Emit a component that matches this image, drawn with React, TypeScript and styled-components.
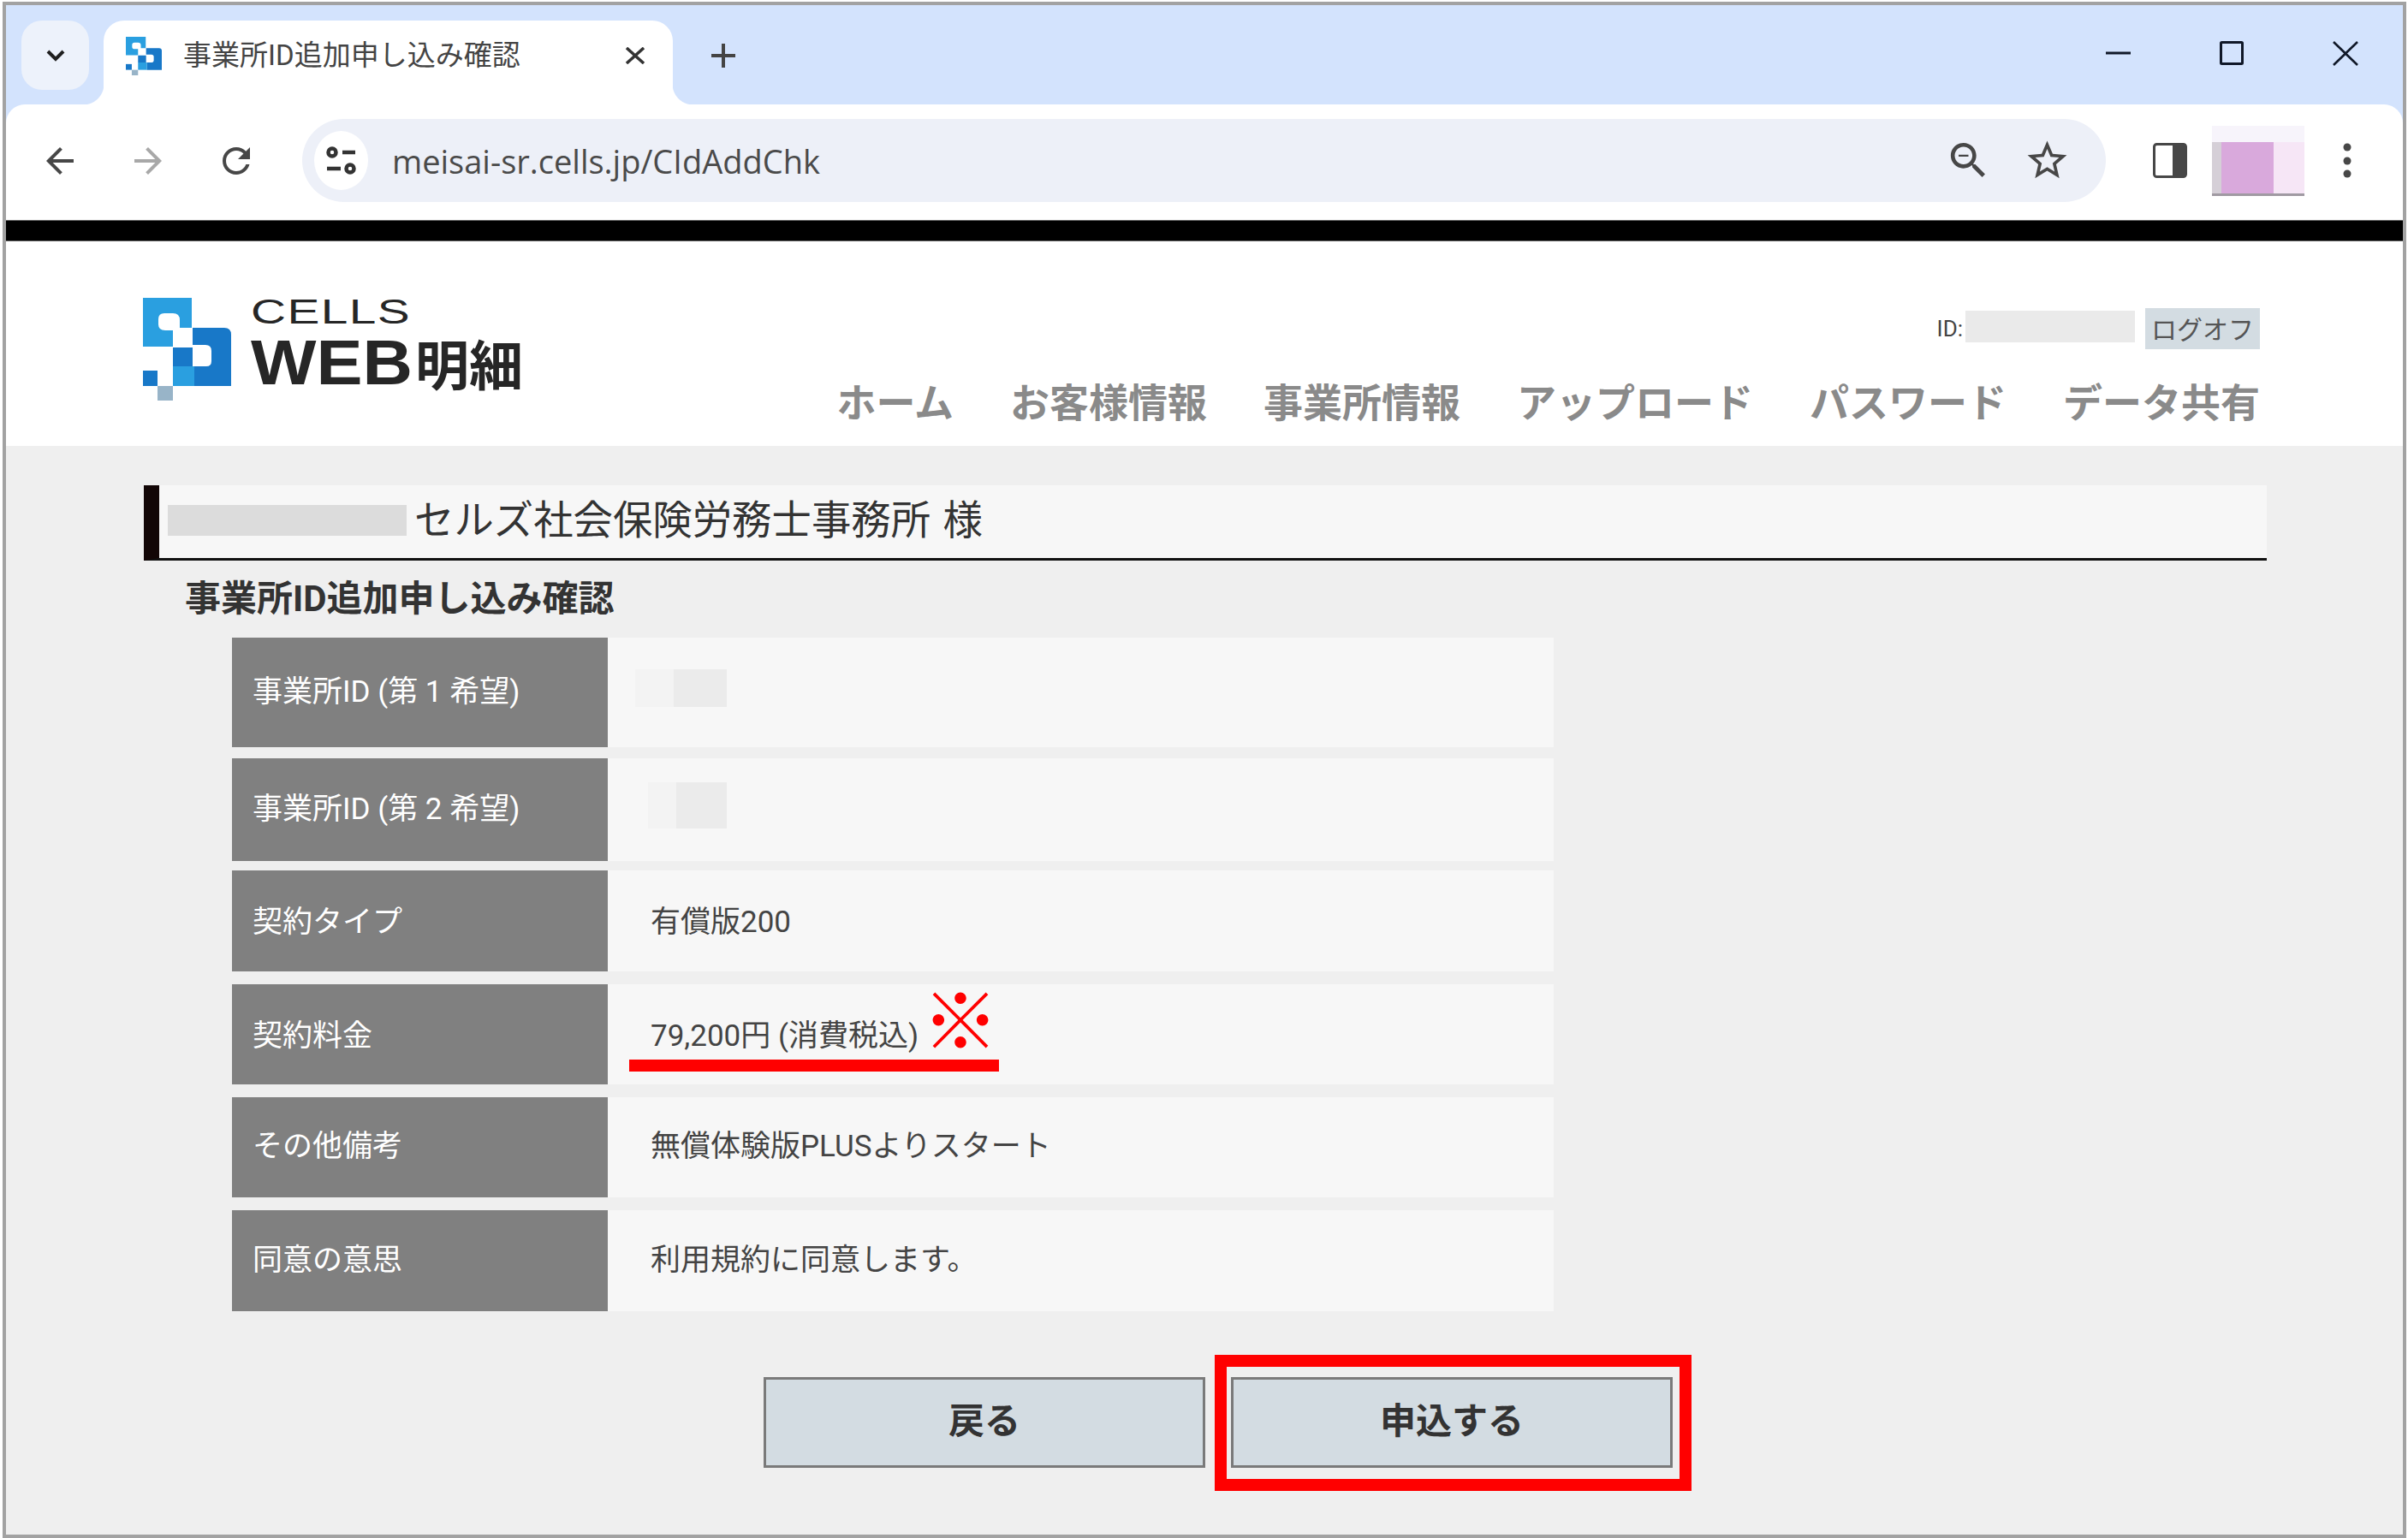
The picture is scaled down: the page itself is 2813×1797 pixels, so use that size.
import React from 'react'
import styled, { createGlobalStyle } from 'styled-components'

const GlobalStyle = createGlobalStyle`
  html, body {
    margin: 0;
    padding: 0;
    background: #fff;
  }
  body {
    font-family: Roboto, "Noto Sans CJK JP", sans-serif;
  }
`

const rows = [
  { label: '事業所ID (第 1 希望)', height: 128, gap: 13, lift: 10, blur: { left: -18, width: 107, height: 44, light: 45 } },
  { label: '事業所ID (第 2 希望)', height: 120, gap: 11, lift: 10, blur: { left: -3, width: 92, height: 54, light: 33 } },
  { label: '契約タイプ', value: '有償版200', height: 118, gap: 15, lift: 5 },
  { label: '契約料金', value: '79,200円 (消費税込)', height: 117, gap: 15, lift: 4, note: true },
  { label: 'その他備考', value: '無償体験版PLUSよりスタート', height: 117, gap: 15, lift: 11 },
  { label: '同意の意思', value: '利用規約に同意します。', height: 118, gap: 0, lift: 10 },
]

const menu = ['ホーム', 'お客様情報', '事業所情報', 'アップロード', 'パスワード', 'データ共有']

function LogoMark({ width, height }: { width: number; height: number }) {
  return (
    <svg width={width} height={height} viewBox="0 0 103 120" preserveAspectRatio="none">
      <path fill="#2a9fe0" d="M0 0H57V35H43V26Q43 18 35 18H25Q18 18 18 25V31Q18 38 26 38H35V57H0Z" />
      <path fill="#1878c8" d="M58 35H95Q103 35 103 43V103H60V80H74Q80 80 80 74V62Q80 55 73 55H58Z" />
      <rect fill="#1878c8" x="35" y="58" width="23" height="22" />
      <rect fill="#2a9fe0" x="35" y="80" width="25" height="23" />
      <rect fill="#1878c8" x="0" y="85" width="17" height="18" />
      <rect fill="#98b4c8" x="17" y="103" width="18" height="17" />
    </svg>
  )
}

function Material({ size, path, color }: { size: number; path: string; color: string }) {
  return (
    <svg width={size} height={size} viewBox="0 0 24 24" fill={color}>
      <path d={path} />
    </svg>
  )
}

const arrowBack = 'M20 11H7.83l5.59-5.59L12 4l-8 8 8 8 1.41-1.41L7.83 13H20z'
const arrowForward = 'M4 11h12.17l-5.59-5.59L12 4l8 8-8 8-1.41-1.41L16.17 13H4z'
const reload = 'M17.65 6.35C16.2 4.9 14.21 4 12 4c-4.42 0-7.99 3.58-7.99 8s3.57 8 7.99 8c3.73 0 6.84-2.55 7.73-6h-2.08c-.82 2.33-3.04 4-5.65 4-3.31 0-6-2.69-6-6s2.69-6 6-6c1.66 0 3.14.69 4.22 1.78L13 11h7V4l-2.35 2.35z'
const zoomOut = 'M15.5 14h-.79l-.28-.27C15.41 12.59 16 11.11 16 9.5 16 5.91 13.09 3 9.5 3S3 5.91 3 9.5 5.91 16 9.5 16c1.61 0 3.09-.59 4.23-1.57l.27.28v.79l5 4.99L20.49 19l-4.99-5zm-6 0C7.01 14 5 11.99 5 9.5S7.01 5 9.5 5 14 7.01 14 9.5 11.99 14 9.5 14zM7 9h5v1H7z'
const star = 'M22 9.24l-7.19-.62L12 2 9.19 8.63 2 9.24l5.46 4.73L5.82 21 12 17.27 18.18 21l-1.63-7.03L22 9.24zM12 15.4l-3.76 2.27 1-4.28-3.32-2.88 4.38-.38L12 6.1l1.71 4.04 4.38.38-3.32 2.88 1 4.28L12 15.4z'

export default function App() {
  return (
    <>
      <GlobalStyle />
      <Frame>
        <TabBar>
          <TabList>
            <svg width="24" height="16" viewBox="0 0 24 16" fill="none" stroke="#1f1f1f" strokeWidth="4">
              <path d="M3 3l9 9 9-9" />
            </svg>
          </TabList>
          <Tab>
            <LogoMark width={42} height={45} />
            <TabTitle>事業所ID追加申し込み確認</TabTitle>
            <TabClose>
              <svg width="24" height="20" viewBox="0 0 24 20" stroke="#333" strokeWidth="3.5">
                <path d="M2 1l20 18M22 1L2 19" />
              </svg>
            </TabClose>
          </Tab>
          <NewTab>
            <svg width="28" height="28" viewBox="0 0 28 28" stroke="#444" strokeWidth="4">
              <path d="M14 0v28M0 14h28" />
            </svg>
          </NewTab>
          <WindowButtons>
            <svg width="29" height="28" viewBox="0 0 29 28" stroke="#101828" strokeWidth="3">
              <path d="M0 14h29" />
            </svg>
            <svg width="28" height="28" viewBox="0 0 28 28" fill="none" stroke="#101828" strokeWidth="3">
              <rect x="1.5" y="1.5" width="25" height="25" rx="1" />
            </svg>
            <svg width="30" height="29" viewBox="0 0 30 29" stroke="#101828" strokeWidth="2.6">
              <path d="M1 1l28 27M29 1L1 28" />
            </svg>
          </WindowButtons>
        </TabBar>

        <Toolbar>
          <NavButtons>
            <Material size={48} path={arrowBack} color="#474747" />
            <Material size={48} path={arrowForward} color="#a8a8a8" />
            <Material size={48} path={reload} color="#474747" />
          </NavButtons>
          <Omnibox>
            <SiteButton>
              <svg width="36" height="36" viewBox="0 0 36 36" fill="none" stroke="#333" strokeWidth="4.5">
                <circle cx="7" cy="8" r="4.5" />
                <path d="M19 8h15M1 27h16" />
                <circle cx="28" cy="27" r="4.5" />
              </svg>
            </SiteButton>
            <Url>meisai-sr.cells.jp/CIdAddChk</Url>
            <OmniboxIcons>
              <Material size={55} path={zoomOut} color="#474747" />
              <Material size={55} path={star} color="#474747" />
            </OmniboxIcons>
          </Omnibox>
          <SidePanelIcon>
            <svg width="40" height="41" viewBox="0 0 40 41">
              <rect x="1.5" y="1.5" width="37" height="38" rx="3" fill="#fff" stroke="#474747" strokeWidth="3" />
              <rect x="23" y="1.5" width="15.5" height="38" fill="#474747" />
            </svg>
          </SidePanelIcon>
          <ProfileBlock />
          <MoreIcon>
            <svg width="12" height="44" viewBox="0 0 12 44" fill="#474747">
              <circle cx="6" cy="6" r="4.5" />
              <circle cx="6" cy="22" r="4.5" />
              <circle cx="6" cy="37" r="4.5" />
            </svg>
          </MoreIcon>
        </Toolbar>

        <BlackBar />

        <Header>
          <Logo>
            <LogoMark width={103} height={120} />
            <LogoText>
              <LogoCells>CELLS</LogoCells>
              <LogoName>
                <LogoWeb>WEB</LogoWeb>
                <LogoKanji>明細</LogoKanji>
              </LogoName>
            </LogoText>
          </Logo>
          <HeaderRight>
            <UserRow>
              <UserId>ID:</UserId>
              <UserBlur />
              <LogoffButton>ログオフ</LogoffButton>
            </UserRow>
            <Menu>
              {menu.map(item => (
                <MenuItem key={item}>{item}</MenuItem>
              ))}
            </Menu>
          </HeaderRight>
        </Header>

        <Content>
          <TitleBar>
            <TitleBlur />
            <TitleText>セルズ社会保険労務士事務所 様</TitleText>
          </TitleBar>
          <Heading>事業所ID追加申し込み確認</Heading>
          <Table>
            {rows.map(row => (
              <Row key={row.label} $height={row.height} $gap={row.gap}>
                <LabelCell $lift={row.lift}>{row.label}</LabelCell>
                <ValueCell $lift={row.lift}>
                  {row.blur ? (
                    <ValueBlur
                      $left={row.blur.left}
                      $width={row.blur.width}
                      $height={row.blur.height}
                      $light={row.blur.light}
                    />
                  ) : (
                    row.value
                  )}
                  {row.note && (
                    <>
                      <NoteMark>※</NoteMark>
                      <NoteLine />
                    </>
                  )}
                </ValueCell>
              </Row>
            ))}
          </Table>
          <Buttons>
            <ActionButton>戻る</ActionButton>
            <Submit>
              <ActionButton>申込する</ActionButton>
              <Highlight />
            </Submit>
          </Buttons>
        </Content>
      </Frame>
    </>
  )
}

const Frame = styled.div`
  box-sizing: border-box;
  width: 2808px;
  height: 1795px;
  margin: 2px 0 0 3px;
  border: 4px solid #a2a2a2;
  display: flex;
  flex-direction: column;
  background: #d3e3fd;
  overflow: hidden;
`

const TabBar = styled.div`
  height: 116px;
  flex-shrink: 0;
  display: flex;
  align-items: flex-start;
  box-sizing: border-box;
  padding: 18px 52px 0 18px;
`

const TabList = styled.div`
  width: 79px;
  height: 81px;
  border-radius: 24px;
  background: #edf2fb;
  display: flex;
  align-items: center;
  justify-content: center;
  flex-shrink: 0;
`

const Tab = styled.div`
  position: relative;
  width: 665px;
  height: 98px;
  margin-left: 17px;
  box-sizing: border-box;
  padding: 0 32px 16px 26px;
  display: flex;
  align-items: center;
  background: #fff;
  border-radius: 24px 24px 0 0;
  flex-shrink: 0;

  &::before,
  &::after {
    content: '';
    position: absolute;
    bottom: 0;
    width: 24px;
    height: 24px;
  }
  &::before {
    left: -24px;
    background: radial-gradient(circle at 0 0, transparent 24px, #fff 25px);
  }
  &::after {
    right: -24px;
    background: radial-gradient(circle at 100% 0, transparent 24px, #fff 25px);
  }
`

const TabTitle = styled.div`
  margin-left: 25px;
  font-size: 33px;
  line-height: 40px;
  color: #444;
  white-space: nowrap;
`

const TabClose = styled.div`
  margin-left: auto;
  display: flex;
`

const NewTab = styled.div`
  height: 81px;
  margin-left: 45px;
  display: flex;
  align-items: center;
`

const WindowButtons = styled.div`
  margin-left: auto;
  height: 76px;
  display: flex;
  align-items: center;
  gap: 104px;
`

const Toolbar = styled.div`
  height: 135px;
  flex-shrink: 0;
  box-sizing: border-box;
  padding: 0 0 4px 39px;
  display: flex;
  align-items: center;
  background: #fff;
  border-radius: 22px 22px 0 0;
`

const NavButtons = styled.div`
  display: flex;
  align-items: center;
  gap: 55px;
`

const Omnibox = styled.div`
  width: 2107px;
  height: 97px;
  margin-left: 53px;
  box-sizing: border-box;
  padding: 0 41px 0 14px;
  display: flex;
  align-items: center;
  background: #edf0f8;
  border-radius: 49px;
`

const SiteButton = styled.div`
  width: 63px;
  height: 69px;
  border-radius: 50%;
  background: #fff;
  display: flex;
  align-items: center;
  justify-content: center;
`

const Url = styled.div`
  margin-left: 28px;
  font-family: "Open Sans", "Noto Sans", sans-serif;
  font-size: 38px;
  color: #4a4a4a;
  white-space: nowrap;
`

const OmniboxIcons = styled.div`
  margin-left: auto;
  display: flex;
  align-items: center;
  gap: 37px;
`

const SidePanelIcon = styled.div`
  margin-left: 55px;
  display: flex;
`

const ProfileBlock = styled.div`
  width: 108px;
  height: 82px;
  margin-left: 29px;
  border-bottom: 3px solid #a09aa2;
  box-sizing: border-box;
  background:
    linear-gradient(#f7f4fb, #f7f4fb) 0 0 / 100% 19px no-repeat,
    linear-gradient(#d9a9dc, #d9a9dc) 11px 0 / 61px 100% no-repeat,
    linear-gradient(#d5cfd7, #d5cfd7) 0 0 / 11px 100% no-repeat,
    #f6e6f6;
`

const MoreIcon = styled.div`
  margin-left: 44px;
  display: flex;
`

const BlackBar = styled.div`
  height: 25px;
  flex-shrink: 0;
  box-sizing: border-box;
  background: #000;
  border-top: 1px solid #666;
  border-bottom: 1px solid #666;
`

const Header = styled.header`
  height: 239px;
  flex-shrink: 0;
  box-sizing: border-box;
  padding: 0 167px 0 160px;
  display: flex;
  justify-content: space-between;
  background: #fff;
`

const Logo = styled.div`
  display: flex;
  align-items: flex-start;
  margin-top: 66px;
`

const LogoText = styled.div`
  margin-left: 23px;
  display: flex;
  flex-direction: column;
`

const LogoCells = styled.div`
  font-family: "Liberation Sans", sans-serif;
  font-size: 40px;
  line-height: 32px;
  height: 32px;
  color: #262626;
  transform: scaleX(1.42);
  transform-origin: left;
  letter-spacing: 1px;
`

const LogoName = styled.div`
  display: flex;
  align-items: center;
  margin-top: 12px;
  height: 62px;
  color: #262626;
  font-weight: 700;
`

const LogoWeb = styled.span`
  font-family: "Liberation Sans", sans-serif;
  font-size: 75px;
  line-height: 62px;
  width: 192px;
  display: inline-block;
  transform: scaleX(1.08);
  transform-origin: left;
`

const LogoKanji = styled.span`
  font-family: "Noto Sans CJK JP", sans-serif;
  font-size: 63px;
  line-height: 62px;
  white-space: nowrap;
`

const HeaderRight = styled.div`
  display: flex;
  flex-direction: column;
  align-items: flex-end;
`

const UserRow = styled.div`
  margin-top: 78px;
  height: 48px;
  display: flex;
  align-items: center;
`

const UserId = styled.span`
  font-size: 26px;
  color: #444;
  margin-right: 3px;
`

const UserBlur = styled.div`
  width: 198px;
  height: 37px;
  background: #eaeaea;
  margin-bottom: 6px;
`

const LogoffButton = styled.div`
  width: 134px;
  height: 48px;
  margin-left: 12px;
  background: #d3dce2;
  color: #555;
  font-size: 30px;
  line-height: 52px;
  text-align: center;
`

const Menu = styled.nav`
  margin-top: 38px;
  display: flex;
  gap: 66px;
`

const MenuItem = styled.div`
  font-size: 46px;
  line-height: 50px;
  font-weight: 700;
  color: #8a8a8a;
  white-space: nowrap;
`

const Content = styled.main`
  flex: 1;
  box-sizing: border-box;
  padding: 46px 0 0 161px;
  background: #efefef;
`

const TitleBar = styled.div`
  width: 2480px;
  height: 88px;
  box-sizing: border-box;
  display: flex;
  align-items: center;
  padding: 0 0 4px 10px;
  background: #f7f7f7;
  border-left: 18px solid #120606;
  border-bottom: 3px solid #111;
`

const TitleBlur = styled.div`
  width: 279px;
  height: 36px;
  background: #dcdcdc;
`

const TitleText = styled.div`
  margin: 0 0 8px 9px;
  font-size: 46.4px;
  word-spacing: 3px;
  color: #333;
  white-space: nowrap;
`

const Heading = styled.h2`
  margin: 0 0 0 48px;
  height: 90px;
  font-size: 42px;
  line-height: 89px;
  font-weight: 700;
  color: #333;
`

const Table = styled.div`
  margin-left: 103px;
  width: 1544px;
  display: flex;
  flex-direction: column;
`

const Row = styled.div<{ $height: number; $gap: number }>`
  height: ${props => props.$height}px;
  margin-bottom: ${props => props.$gap}px;
  display: flex;
`

const LabelCell = styled.div<{ $lift: number }>`
  width: 439px;
  flex-shrink: 0;
  box-sizing: border-box;
  padding: 0 0 ${props => props.$lift}px 24px;
  display: flex;
  align-items: center;
  background: #808080;
  color: #fff;
  font-size: 35px;
`

const ValueCell = styled.div<{ $lift: number }>`
  position: relative;
  flex: 1;
  box-sizing: border-box;
  padding: 0 0 ${props => props.$lift}px 50px;
  display: flex;
  align-items: center;
  background: #f7f7f7;
  color: #444;
  font-size: 35px;
`

const ValueBlur = styled.div<{ $left: number; $width: number; $height: number; $light: number }>`
  margin-left: ${props => props.$left}px;
  width: ${props => props.$width}px;
  height: ${props => props.$height}px;
  background: linear-gradient(
    to right,
    #f3f3f3 ${props => props.$light}px,
    #ebebeb ${props => props.$light}px
  );
`

const NoteMark = styled.span`
  position: absolute;
  left: 367px;
  top: -3px;
  font-family: "Noto Sans CJK JP", sans-serif;
  font-size: 90px;
  line-height: 80px;
  color: #f00;
`

const NoteLine = styled.div`
  position: absolute;
  left: 25px;
  top: 88px;
  width: 432px;
  height: 14px;
  background: #f00;
`

const Buttons = styled.div`
  margin: 77px 0 0 724px;
  display: flex;
  gap: 30px;
`

const Submit = styled.div`
  position: relative;
`

const ActionButton = styled.button`
  width: 516px;
  height: 106px;
  box-sizing: border-box;
  background: #d3dce2;
  border: 3px solid #7a7a7a;
  color: #333;
  font-family: Roboto, "Noto Sans CJK JP", sans-serif;
  font-size: 42px;
  font-weight: 700;
  padding: 0 0 12px;
`

const Highlight = styled.div`
  position: absolute;
  left: -19px;
  right: -22px;
  top: -26px;
  bottom: -27px;
  border: 14px solid #f00;
  pointer-events: none;
`
